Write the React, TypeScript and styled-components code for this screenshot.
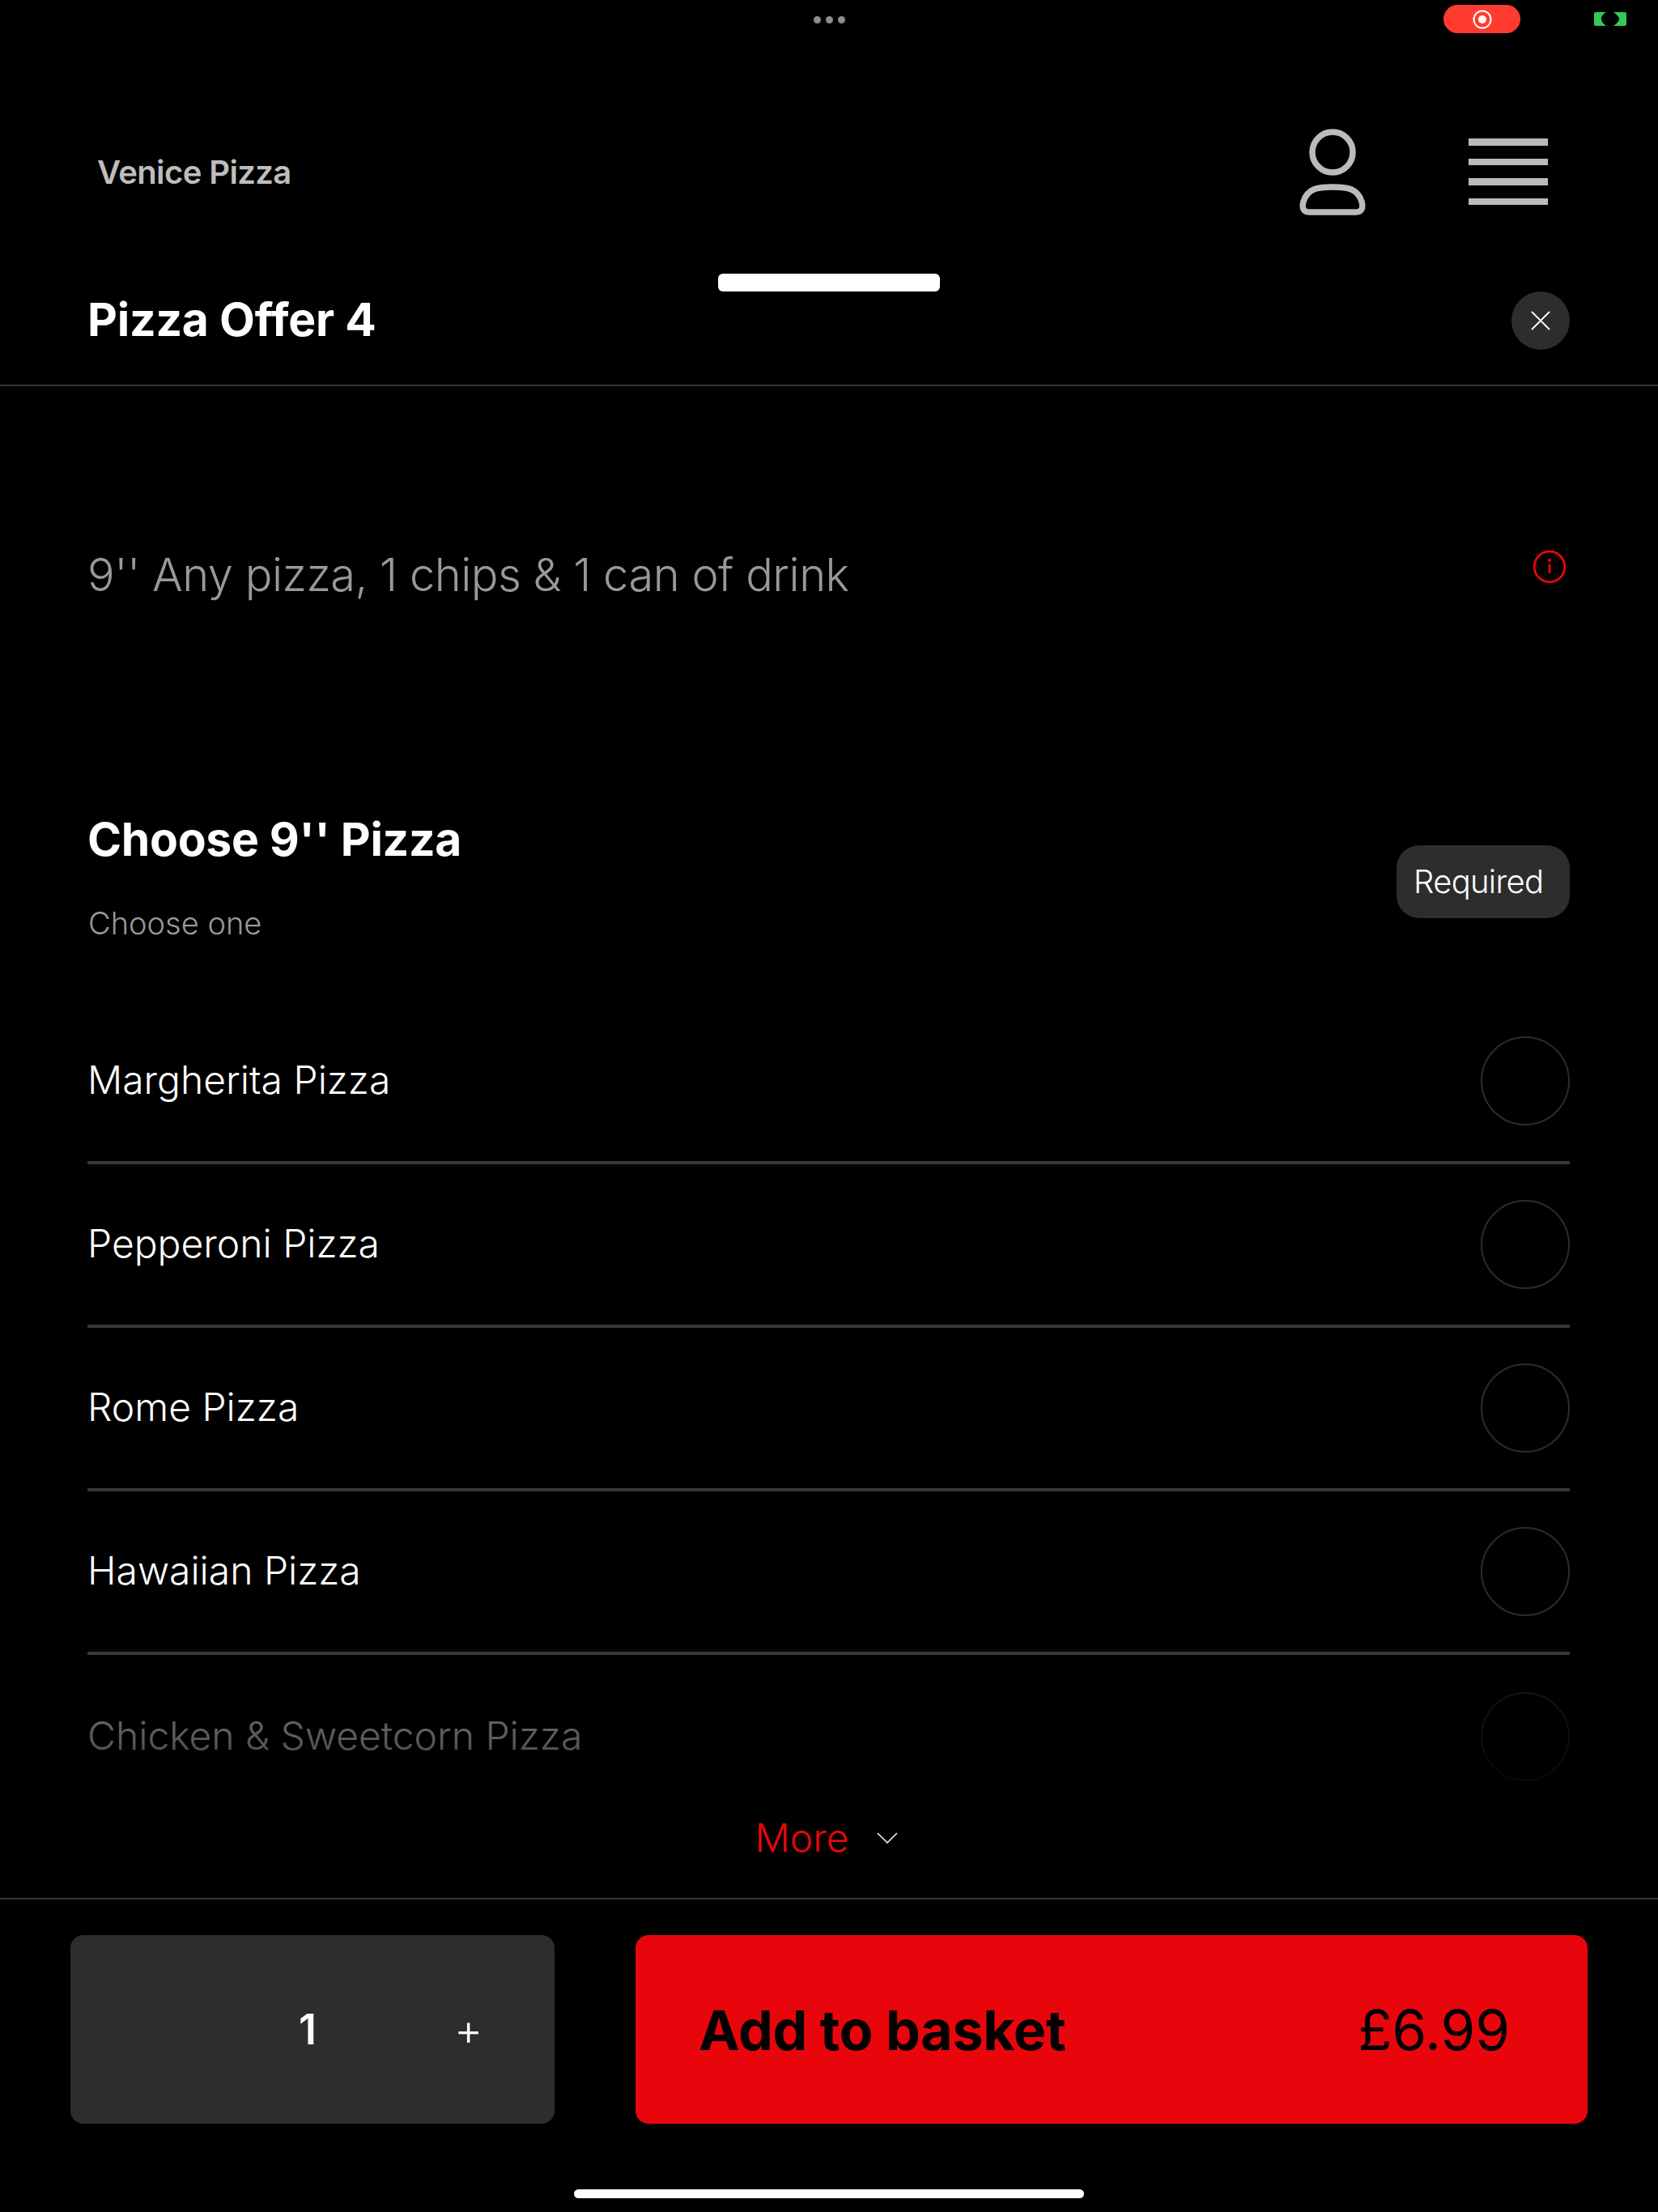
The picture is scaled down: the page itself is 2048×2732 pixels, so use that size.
import styled, { createGlobalStyle } from 'styled-components'

const GREY_FILL = '#2d2d2d'
const RED = '#e8060c'
const PIZZAS = ['Margherita Pizza', 'Pepperoni Pizza', 'Rome Pizza', 'Hawaiian Pizza', 'Chicken & Sweetcorn Pizza']

const App = () => {
	return (
		<Page>
			<GlobalStyle />
			<StatusBar>
				<span />
				<Dots>
					<Dot />
					<Dot />
					<Dot />
				</Dots>
				<StatusRight>
					<RecordPill>
						<svg width='24' height='24' viewBox='0 0 24 24'>
							<circle cx='12' cy='12' r='10.5' fill='none' stroke='#fff' strokeWidth='2' />
							<circle cx='12' cy='12' r='5' fill='#fff' />
						</svg>
					</RecordPill>
					<svg width='40' height='17' viewBox='0 0 40 17' fill='#34c759'>
						<path d='M2 0h13C10 3 8.500 6 9 9c.5 3 3 6 6 8H2q-2 0-2-2V2q0-2 2-2z' />
						<path d='M24 0h14q2 0 2 2v13q0 2-2 2H24c4-3 7-6 7-8.500S28 3 24 0z' />
					</svg>
				</StatusRight>
			</StatusBar>

			<TopNav>
				<ShopName>Venice Pizza</ShopName>
				<NavIcons>
					<svg width='84' height='107' viewBox='0 0 84 107' fill='none' stroke='#bbb' strokeWidth='7.500'>
						<circle cx='42' cy='29' r='25' />
						<path d='M42 72c19 0 31 2 36 18 2.500 9-1 13-7 13H13c-6 0-9.500-4-7-13 5-16 17-18 36-18z' />
					</svg>
					<MenuLines>
						<MenuLine />
						<MenuLine />
						<MenuLine />
						<MenuLine />
					</MenuLines>
				</NavIcons>
			</TopNav>

			<Handle />
			<TitleRow>
				<Title>Pizza Offer 4</Title>
				<CloseButton>
					<svg width='24' height='24' viewBox='0 0 24 24' stroke='#fff' strokeWidth='1.800'>
						<path d='M1 1l22 22M23 1L1 23' />
					</svg>
				</CloseButton>
			</TitleRow>

			<DescriptionRow>
				<Description>9'' Any pizza, 1 chips &amp; 1 can of drink</Description>
				<InfoIcon width='42' height='42' viewBox='0 0 42 42' fill='none' stroke={RED}>
					<circle cx='21' cy='21' r='18.800' strokeWidth='2.800' />
					<circle cx='21' cy='13' r='2' fill={RED} stroke='none' />
					<path d='M21 18v11' strokeWidth='2.800' />
				</InfoIcon>
			</DescriptionRow>

			<ChoiceHeader>
				<div>
					<ChoiceTitle>Choose 9'' Pizza</ChoiceTitle>
					<ChoiceHint>Choose one</ChoiceHint>
				</div>
				<RequiredTag>Required</RequiredTag>
			</ChoiceHeader>

			<OptionList>
				{PIZZAS.map(name => (
					<OptionRow key={name}>
						<OptionName>{name}</OptionName>
						<Radio />
					</OptionRow>
				))}
				<ListFade />
			</OptionList>

			<MoreRow>
				<MoreLabel>More</MoreLabel>
				<svg width='26' height='16' viewBox='0 0 26 16' fill='none' stroke='#fff' strokeWidth='1.500'>
					<path d='M1 2l12 12L25 2' />
				</svg>
			</MoreRow>

			<Footer>
				<Stepper>
					<Quantity>1</Quantity>
					<PlusSign>+</PlusSign>
				</Stepper>
				<AddButton>
					<AddLabel>Add to basket</AddLabel>
					<Price>£6.99</Price>
				</AddButton>
			</Footer>
			<HomeBar />
		</Page>
	)
}

export default App

const GlobalStyle = createGlobalStyle`
	html, body {
		margin: 0;
		background: #000;
	}
	* {
		box-sizing: border-box;
	}
`
const Page = styled.div`
	display: flex;
	flex-direction: column;
	width: 2048px;
	height: 2732px;
	overflow: hidden;
	background: #000;
	font-family: Inter, 'Noto Sans', sans-serif;
`
const StatusBar = styled.div`
	display: grid;
	grid-template-columns: 1fr auto 1fr;
	height: 48px;
	padding: 6px 39px 0;
`
const Dots = styled.div`
	display: flex;
	gap: 6px;
	height: 36px;
	align-items: center;
`
const Dot = styled.i`
	width: 9px;
	height: 9px;
	border-radius: 50%;
	background: #8e8e8e;
`
const StatusRight = styled.div`
	display: flex;
	justify-content: flex-end;
	align-items: center;
	gap: 91px;
	height: 35px;
`
const RecordPill = styled.div`
	display: flex;
	align-items: center;
	justify-content: center;
	width: 95px;
	height: 35px;
	border-radius: 18px;
	background: #ff3b30;
`
const TopNav = styled.header`
	display: flex;
	justify-content: space-between;
	align-items: center;
	height: 290px;
	padding: 110px 136px 72px 120px;
`
const ShopName = styled.div`
	color: #bdbdbd;
	font-size: 40px;
	font-weight: 600;
	letter-spacing: -0.6px;
`
const NavIcons = styled.div`
	display: flex;
	align-items: center;
	gap: 126px;
`
const MenuLines = styled.div`
	display: flex;
	flex-direction: column;
	gap: 16px;
	width: 98px;
`
const MenuLine = styled.i`
	height: 8.5px;
	background: #bbb;
`
const Handle = styled.div`
	align-self: center;
	width: 274px;
	height: 22px;
	border-radius: 6px;
	background: #fff;
`
const TitleRow = styled.div`
	display: flex;
	justify-content: space-between;
	align-items: center;
	height: 117px;
	padding: 1px 109px 44px 108px;
	border-bottom: 2px solid #333;
	flex-shrink: 0;
`
const Title = styled.h1`
	margin: 0 0 3px;
	color: #fff;
	font-size: 57px;
	font-weight: 700;
	letter-spacing: -0.2px;
`
const CloseButton = styled.button`
	display: flex;
	align-items: center;
	justify-content: center;
	width: 72px;
	height: 72px;
	padding: 0;
	border: none;
	border-radius: 50%;
	background: ${GREY_FILL};
`
const DescriptionRow = styled.div`
	display: flex;
	justify-content: space-between;
	align-items: flex-start;
	height: 490px;
	padding: 201px 113px 0 108px;
`
const Description = styled.p`
	margin: 0;
	color: #999;
	font-size: 56px;
	font-weight: 350;
	line-height: 64px;
	letter-spacing: -0.5px;
`
const InfoIcon = styled.svg`
	margin-top: 1px;
`
const ChoiceHeader = styled.div`
	display: flex;
	justify-content: space-between;
	align-items: center;
	height: 269px;
	padding: 0 109px 37px 108px;
`
const ChoiceTitle = styled.h2`
	margin: 0;
	color: #fff;
	font-size: 57px;
	font-weight: 700;
	line-height: 68px;
	letter-spacing: -0.3px;
`
const ChoiceHint = styled.p`
	margin: 46px 0 0;
	padding-left: 1px;
	color: #999;
	font-size: 38px;
	font-weight: 350;
	line-height: 46px;
`
const RequiredTag = styled.div`
	display: flex;
	align-items: center;
	width: 214px;
	height: 90px;
	margin-top: 11px;
	padding-left: 21px;
	border-radius: 28px;
	background: ${GREY_FILL};
	color: #fff;
	font-size: 40px;
	font-weight: 350;
	letter-spacing: -0.7px;
`
const OptionList = styled.div`
	position: relative;
	height: 979px;
	padding: 0 109px 0 108px;
	overflow: hidden;
	flex-shrink: 0;
`
const OptionRow = styled.div`
	display: flex;
	justify-content: space-between;
	align-items: center;
	height: 202px;
	border-bottom: 4px solid #383838;
	&:nth-child(5) {
		border-bottom: none;
	}
`
const OptionName = styled.span`
	padding-bottom: 3px;
	color: #fff;
	font-size: 48px;
	font-weight: 350;
`
const Radio = styled.i`
	width: 110px;
	height: 110px;
	border: 2px solid #2c2c2c;
	border-radius: 50%;
`
const ListFade = styled.div`
	position: absolute;
	left: 0;
	right: 0;
	bottom: 0;
	height: 171px;
	background: linear-gradient(rgba(0, 0, 0, 0.55), rgba(0, 0, 0, 0.64) 60%, rgba(0, 0, 0, 0.85));
`
const MoreRow = styled.div`
	display: flex;
	justify-content: center;
	align-items: center;
	gap: 35px;
	height: 129px;
	padding: 0 6px 20px 0;
`
const MoreLabel = styled.span`
	color: ${RED};
	font-size: 48px;
	font-weight: 350;
`
const Footer = styled.div`
	display: flex;
	gap: 100px;
	height: 279px;
	padding: 44px 87px 0;
	border-top: 2px solid #333;
	flex-shrink: 0;
`
const Stepper = styled.div`
	display: flex;
	align-items: center;
	width: 598px;
	height: 233px;
	padding-left: 282px;
	gap: 170px;
	border-radius: 16px;
	background: ${GREY_FILL};
	color: #fff;
`
const Quantity = styled.span`
	font-size: 52px;
	font-weight: 600;
`
const PlusSign = styled.span`
	font-size: 54px;
	font-weight: 300;
`
const AddButton = styled.button`
	display: flex;
	justify-content: space-between;
	align-items: center;
	width: 1176px;
	height: 233px;
	padding: 0 96px 0 78px;
	border: none;
	border-radius: 16px;
	background: ${RED};
	color: #000;
	font-family: inherit;
`
const AddLabel = styled.span`
	font-size: 68px;
	font-weight: 700;
	letter-spacing: -0.3px;
`
const Price = styled.span`
	font-size: 69px;
	font-weight: 400;
`
const HomeBar = styled.div`
	align-self: center;
	width: 630px;
	height: 11px;
	margin-top: 81px;
	border-radius: 6px;
	background: #fff;
	flex-shrink: 0;
`
